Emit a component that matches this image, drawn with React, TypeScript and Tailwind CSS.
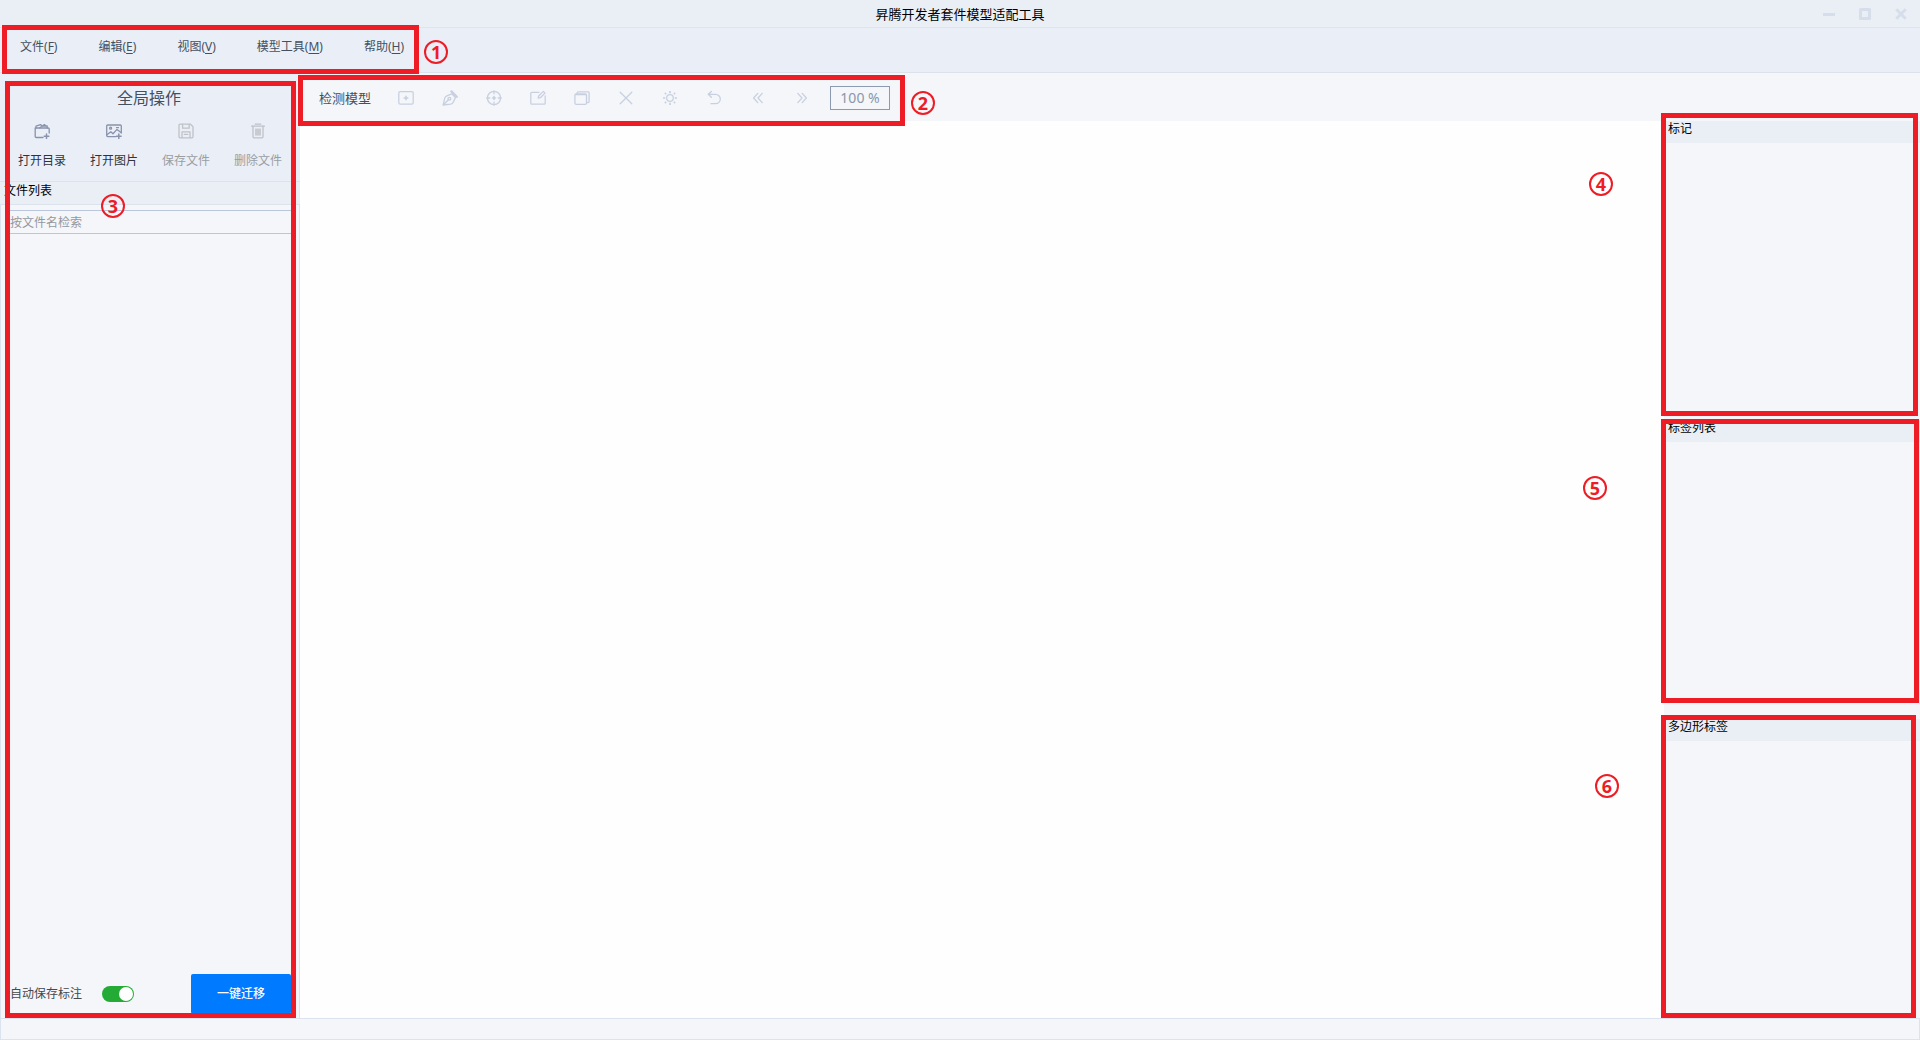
import React, { type ReactNode } from "react";

const FONT = "font-['Noto_Sans','Noto_Sans_CJK_SC',sans-serif]";

function Highlight({ className }: { className: string }) {
  return <div aria-hidden="true" className={`pointer-events-none absolute z-10 border-5 border-[#ee1c25] ${className}`} />;
}

function Marker({ n, className }: { n: number; className: string }) {
  return (
    <span
      className={`pointer-events-none absolute z-20 flex size-6 items-center justify-center rounded-full border-2 border-[#ee1c25] font-['Open_Sans','Noto_Sans',sans-serif] text-lg leading-none font-bold text-[#ee1c25] ${className}`}
    >
      {n}
    </span>
  );
}

function Icon({ children, size = 16 }: { children: ReactNode; size?: number }) {
  return (
    <svg
      width={size}
      height={size}
      viewBox="0 0 16 16"
      fill="none"
      stroke="currentColor"
      strokeWidth="1.3"
      strokeLinecap="round"
      strokeLinejoin="round"
      aria-hidden="true"
    >
      {children}
    </svg>
  );
}

const menus = [
  { label: "文件", k: "F" },
  { label: "编辑", k: "E" },
  { label: "视图", k: "V" },
  { label: "模型工具", k: "M" },
  { label: "帮助", k: "H" },
];

const fileActions: { label: string; disabled?: boolean; icon: ReactNode }[] = [
  {
    label: "打开目录",
    icon: (
      <>
        <path d="M9 14.5H2.2a1 1 0 0 1-1-1V5h13a1 1 0 0 1 1 1v4" />
        <path d="M2 5V3.2L6.5 1.6 8 3h5.2v2M5.8 4.8 10.4 1.6 12 3" />
        <path d="M12.5 11v4.5M10.2 13.2h4.6" strokeWidth="1.5" />
      </>
    ),
  },
  {
    label: "打开图片",
    icon: (
      <>
        <path d="M10 13.6H1.7a1 1 0 0 1-1-1V3a1 1 0 0 1 1-1h12.6a1 1 0 0 1 1 1v7" />
        <circle cx="4.6" cy="5.2" r="1" />
        <path d="m1 11.8 3.8-3 2.2 2L11 6.4l4 3.2M10.5 4.6h2" />
        <path d="M12.8 11v4.5M10.5 13.2h4.6" strokeWidth="1.5" />
      </>
    ),
  },
  {
    label: "保存文件",
    disabled: true,
    icon: (
      <>
        <path d="M1 2.2a1 1 0 0 1 1-1h10.5L15 3.7v10.1a1 1 0 0 1-1 1H2a1 1 0 0 1-1-1z" />
        <path d="M4.6 1.4v3.8h6.6V1.4M4 14.6V8.8h8v5.8M6.3 11.4h3.4" />
      </>
    ),
  },
  {
    label: "删除文件",
    disabled: true,
    icon: (
      <>
        <path d="M1.6 3.2h12.8M5.2 1.2h5.6" />
        <path d="M3 3.2v10.6a1 1 0 0 0 1 1h8a1 1 0 0 0 1-1V3.2" />
        <path d="M5 5.6h6v7H5z" fill="currentColor" stroke="none" opacity="0.8" />
      </>
    ),
  },
];

const tools: { label: string; icon: ReactNode }[] = [
  {
    label: "矩形框",
    icon: (
      <>
        <rect x="0.8" y="1.6" width="14.4" height="12.6" rx="1.4" />
        <path d="M8 6.2v3.6M6.2 8h3.6" strokeWidth="1.6" />
      </>
    ),
  },
  {
    label: "多边形",
    icon: (
      <>
        <path d="M1.2 15 2.6 8.6c.3-1.4 1-2.2 2.2-2.7l5-2.1 3.6 3.8-2.2 4.6c-.5 1.1-1.300 1.700-2.500 1.900z" />
        <path d="m9.400 1.400 5.400 5.400" strokeWidth="2.200" />
        <path d="m1.400 14.800 5-5" />
        <circle cx="7.400" cy="8.800" r="1.400" />
      </>
    ),
  },
  {
    label: "定位",
    icon: (
      <>
        <circle cx="8" cy="8" r="6.6" />
        <path d="M8 .8v3M8 12.2v3M.8 8h3M12.2 8h3" />
        <path d="M8 6.6v2.8M6.600 8h2.800" strokeWidth="1.6" />
      </>
    ),
  },
  {
    label: "编辑标注",
    icon: (
      <>
        <path d="M9 2.4H1.8a1 1 0 0 0-1 1v9.8a1 1 0 0 0 1 1h12.4a1 1 0 0 0 1-1V6" />
        <path d="m8.2 8.2.5-2.2 4.6-4.6 1.7 1.7-4.6 4.6z" />
      </>
    ),
  },
  {
    label: "复制",
    icon: (
      <>
        <rect x="0.9" y="3.8" width="11.6" height="10.6" rx="1.4" />
        <path d="M3.2 3.6V2.8a1 1 0 0 1 1-1h9.900a1 1 0 0 1 1 1v8.800a1 1 0 0 1-1 1h-1.400M1.400 4.600h11" />
      </>
    ),
  },
  { label: "删除标注", icon: <path d="m2.200 2.200 11.600 11.600M13.800 2.200 2.200 13.800" /> },
  {
    label: "亮度",
    icon: (
      <>
        <circle cx="8" cy="8" r="3.300" />
        <path
          d="M8 1v2.200M8 12.800V15M1 8h2.200M12.800 8H15M2.900 2.900l1.200 1.200M11.900 11.900l1.200 1.200M2.900 13.100l1.200-1.200M11.900 4.100l1.200-1.200"
          strokeWidth="1.700"
          strokeLinecap="butt"
        />
      </>
    ),
  },
  { label: "撤销", icon: <path d="M5.400 1.400 2.200 4.300l3.200 2.900M2.400 4.300h7.200a4.700 4.700 0 0 1 0 9.400H5" /> },
  { label: "上一张", icon: <path d="M7.800 3.400 3.600 8l4.200 4.600M12.200 3.400 8 8l4.200 4.600" /> },
  { label: "下一张", icon: <path d="M3.800 3.400 8 8l-4.200 4.600M8.200 3.400 12.400 8l-4.200 4.600" /> },
];

const panels = [
  { title: "标记", n: 4, box: "-top-2 right-0.5 bottom-1 -left-[3px]", marker: "top-[51px] -left-[75px]" },
  { title: "标签列表", n: 5, box: "-top-px right-px bottom-4 -left-[3px]", marker: "top-14 -left-[81px]" },
  { title: "多边形标签", n: 6, box: "-top-1 right-1 bottom-0 -left-[3px]", marker: "top-[55px] -left-[69px]" },
];

function TitleBar() {
  return (
    <header className="relative flex h-7 shrink-0 items-center justify-center border-b border-[#dde4ee] bg-[#eaeff6]">
      <h1 className="text-[13px] leading-5 text-black">昇腾开发者套件模型适配工具</h1>
      <div className="absolute top-2 right-[13px] flex gap-6 text-[#d5deea]">
        <button type="button" aria-label="最小化">
          <svg width="12" height="12" viewBox="0 0 12 12" aria-hidden="true">
            <path d="M0 6.5h12" stroke="currentColor" strokeWidth="3" />
          </svg>
        </button>
        <button type="button" aria-label="最大化">
          <svg width="12" height="12" viewBox="0 0 12 12" fill="none" aria-hidden="true">
            <rect x="1.5" y="1.5" width="9" height="9" stroke="currentColor" strokeWidth="3" strokeLinejoin="round" />
          </svg>
        </button>
        <button type="button" aria-label="关闭">
          <svg width="12" height="12" viewBox="0 0 12 12" aria-hidden="true">
            <path d="m1.3 1.3 9.4 9.4M10.7 1.3l-9.4 9.4" stroke="currentColor" strokeWidth="3" />
          </svg>
        </button>
      </div>
    </header>
  );
}

function MenuBar() {
  return (
    <div className="flex h-[45px] shrink-0 border-b border-[#dbe2ec] bg-[#eaeff7]">
      <nav className="relative flex gap-[41px] pt-[9px] pr-[15px] pl-5">
        {menus.map((m) => (
          <button key={m.k} type="button" className="h-5 text-xs leading-5 whitespace-nowrap text-[#45505f]">
            {m.label}(<span className="underline underline-offset-2">{m.k}</span>)
          </button>
        ))}
        <Highlight className="-top-[3px] right-0 -bottom-0.5 left-0.5" />
        <Marker n={1} className="top-3 -right-[29px]" />
      </nav>
    </div>
  );
}

function Sidebar() {
  return (
    <aside className="relative flex w-[300px] shrink-0 flex-col bg-[#f4f6fa]">
      <section className="bg-[#eaeff7]">
        <h2 className="pt-3 pr-0.5 text-center text-base leading-[26px] text-[#45505f]">全局操作</h2>
        <div className="flex px-1.5 pt-3 pb-2.5">
          {fileActions.map((a) => (
            <button
              key={a.label}
              type="button"
              disabled={a.disabled}
              className={`flex w-18 flex-col items-center gap-3 ${a.disabled ? "text-[#bfc2c8]" : "text-[#8993ab]"}`}
            >
              <Icon>{a.icon}</Icon>
              <span className={`text-xs leading-5 ${a.disabled ? "text-[#9b9da1]" : "text-[#2f343b]"}`}>{a.label}</span>
            </button>
          ))}
        </div>
      </section>
      <h2 className="h-6 shrink-0 border-y border-[#dbe3ee] bg-[#eaeff6] pl-1 text-xs leading-[18px] text-black">文件列表</h2>
      <div className="flex grow flex-col border-x border-[#dbe3ee] pt-[5px]">
        <input
          type="search"
          aria-label="按文件名检索"
          placeholder="按文件名检索"
          className="mx-1.5 h-6 shrink-0 border border-[#b9c6dc] bg-transparent pl-0.5 text-xs leading-5 text-[#2f343b] outline-none placeholder:text-[#94989f]"
        />
        <div className="mt-auto flex items-center pr-2 pb-1 pl-[9px]">
          <label htmlFor="autosave" className="text-xs leading-5 text-[#45484d]">
            自动保存标注
          </label>
          <input
            id="autosave"
            type="checkbox"
            role="switch"
            defaultChecked
            className="ml-5 flex h-4 w-8 appearance-none items-center rounded-full bg-[#b9c6dc] px-px before:size-3.5 before:rounded-full before:bg-white checked:justify-end checked:bg-[#24ab36]"
          />
          <button type="button" className="ml-auto h-10 w-25 rounded-xs bg-[#007bff] text-xs leading-5 font-medium text-white">
            一键迁移
          </button>
        </div>
      </div>
      <Highlight className="top-2 right-1 bottom-0 left-[5px]" />
      <Marker n={3} className="top-[121px] left-[101px]" />
    </aside>
  );
}

function Toolbar() {
  return (
    <div className="flex h-12 shrink-0 bg-[#f4f6fa]">
      <div className="relative flex items-center pt-px pr-[15px] pl-[19px]">
        <span className="text-[13px] leading-5 whitespace-nowrap text-[#45505f]">检测模型</span>
        <div className="ml-[13px] flex">
          {tools.map((t) => (
            <button key={t.label} type="button" aria-label={t.label} className="flex h-8 w-11 items-center justify-center text-[#c8d0e0]">
              <Icon>{t.icon}</Icon>
            </button>
          ))}
        </div>
        <input
          type="text"
          aria-label="缩放比例"
          defaultValue="100 %"
          className="ml-1.5 h-6 w-15 border border-[#8b9ab1] bg-transparent text-center text-sm leading-5 text-[#8b97ab] outline-none"
        />
        <Highlight className="top-0.5 right-0 -bottom-[5px] -left-0.5" />
        <Marker n={2} className="top-[18px] -right-[30px]" />
      </div>
    </div>
  );
}

export default function App() {
  return (
    <div className={`flex h-screen flex-col overflow-hidden bg-[#f4f6fa] ${FONT}`}>
      <TitleBar />
      <MenuBar />
      <div className="flex min-h-0 grow">
        <Sidebar />
        <div className="flex min-w-0 grow flex-col">
          <Toolbar />
          <div className="flex min-h-0 grow">
            <main className="grow bg-[#fefefe]" aria-label="画布" />
            <aside className="flex w-64 shrink-0 flex-col">
              {panels.map((p) => (
                <section key={p.title} className="relative flex-1 bg-[#f4f6fa]">
                  <h2 className="h-[22px] bg-[#eaeff6] pl-1 text-xs leading-4 text-black">{p.title}</h2>
                  <Highlight className={p.box} />
                  <Marker n={p.n} className={p.marker} />
                </section>
              ))}
            </aside>
          </div>
        </div>
      </div>
      <footer className="h-[22px] shrink-0 border border-[#dbe3ee] bg-[#f4f6fa]" />
    </div>
  );
}
